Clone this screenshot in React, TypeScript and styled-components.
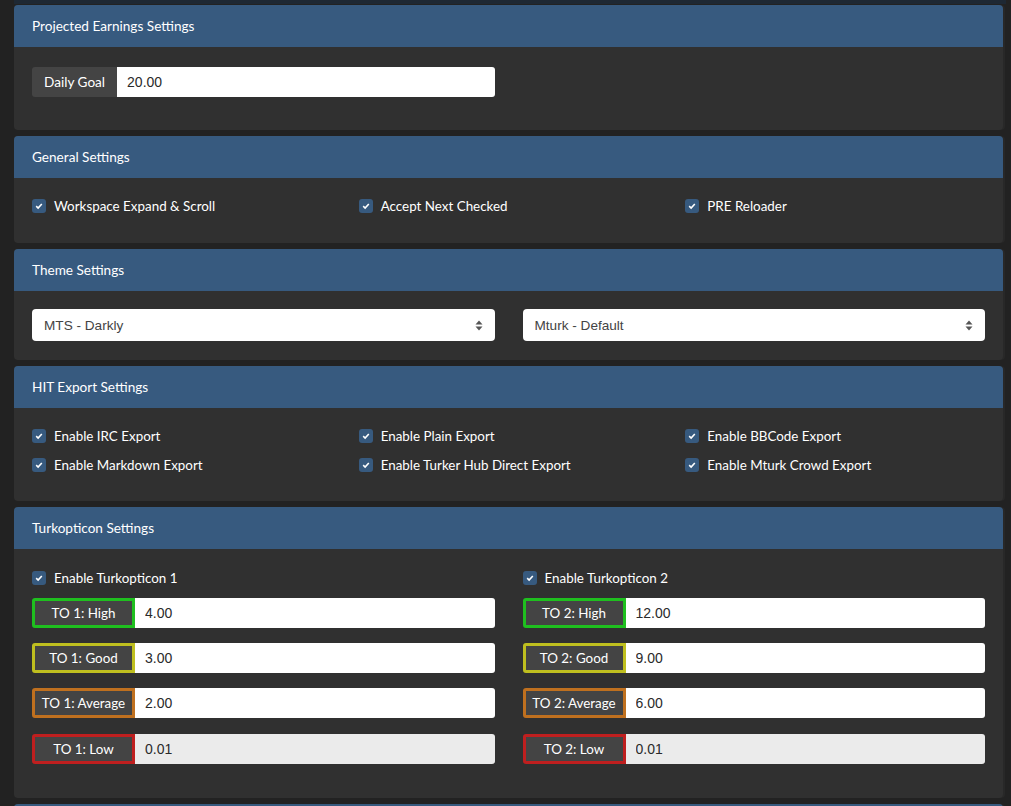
import React from "react";
import styled, { createGlobalStyle } from "styled-components";

const GlobalStyle = createGlobalStyle`
  html, body {
    margin: 0;
    padding: 0;
    background: #222;
  }
  body {
    font-family: Lato, "Noto Sans", sans-serif;
    color: #fff;
  }
  * {
    box-sizing: border-box;
  }
`;

const Page = styled.div`
  min-height: 806px;
  padding: 0 8px 0 14px;
  background: #222;
  overflow: hidden;
`;

const TopEdge = styled.div`
  height: 5px;
  margin-right: -3px;
  border-bottom: 1px solid #222;
  background: #1e2833;
`;

const Card = styled.section`
  margin-bottom: 6px;
  background: #303030;
  border-radius: 4px;
  overflow: hidden;
  box-shadow: 2px 0 0 #282828;
`;

const CardHeader = styled.header`
  height: 42px;
  padding: 0 18px;
  display: flex;
  align-items: center;
  background: #375a7f;
  font-size: 13.6px;
  color: #fff;
`;

const CardBody = styled.div<{ $pad: string }>`
  padding: ${(p) => p.$pad};
`;

const Columns = styled.div<{ $cols: number; $gap: number }>`
  display: grid;
  grid-template-columns: repeat(${(p) => p.$cols}, 1fr);
  column-gap: ${(p) => p.$gap}px;
  row-gap: 9px;
`;

const Stack = styled.div`
  display: flex;
  flex-direction: column;
`;

const CheckRow = styled.label<{ $mb?: number }>`
  display: flex;
  align-items: center;
  gap: 8px;
  height: 20px;
  margin-bottom: ${(p) => p.$mb ?? 0}px;
  font-size: 13.4px;
  color: #fff;
`;

const Box = styled.span`
  width: 14px;
  height: 14px;
  border-radius: 3px;
  background: #375a7f;
  display: flex;
  align-items: center;
  justify-content: center;
  flex-shrink: 0;
`;

const InputGroup = styled.div<{ $mb?: number }>`
  display: flex;
  height: 30px;
  margin-bottom: ${(p) => p.$mb ?? 0}px;
`;

const Addon = styled.span`
  display: flex;
  align-items: center;
  padding: 0 12px;
  background: #444;
  border-radius: 3px 0 0 3px;
  font-size: 13.6px;
  color: #fff;
  white-space: nowrap;
`;

const ToAddon = styled.span<{ $color: string }>`
  width: 103px;
  flex-shrink: 0;
  display: flex;
  align-items: center;
  justify-content: center;
  background: #444;
  border: 3px solid ${(p) => p.$color};
  border-radius: 3px 0 0 3px;
  font-size: 13.4px;
  color: #fff;
  white-space: nowrap;
`;

const TextInput = styled.input<{ $disabled?: boolean }>`
  flex: 1;
  min-width: 0;
  height: 100%;
  border: none;
  outline: none;
  border-radius: 0 3px 3px 0;
  padding: 0 10px;
  background: ${(p) => (p.$disabled ? "#ebebeb" : "#fff")};
  font-family: "Liberation Sans", Arial, sans-serif;
  font-size: 14px;
  color: #2a2a2a;
`;

const SelectBox = styled.div`
  display: flex;
  align-items: center;
  height: 32px;
  padding: 0 12px;
  background: #fff;
  border-radius: 4px;
`;

const Select = styled.select`
  flex: 1;
  appearance: none;
  border: none;
  outline: none;
  background: transparent;
  padding: 0;
  font-family: "Liberation Sans", Arial, sans-serif;
  font-size: 13.6px;
  color: #444;
`;

const Check = () => (
  <Box>
    <svg width="8" height="8" viewBox="0 0 8 8">
      <path d="M1.2 4.2 L3.1 6 L6.8 2" fill="none" stroke="#fff" strokeWidth="1.6" />
    </svg>
  </Box>
);

const Arrows = () => (
  <svg width="8" height="11" viewBox="0 0 8 11">
    <path d="M4 0.5 L7.5 4.5 H0.5 Z M4 10.5 L0.5 6.5 H7.5 Z" fill="#555" />
  </svg>
);

const Checkbox = ({ label, mb }: { label: string; mb?: number }) => (
  <CheckRow $mb={mb}>
    <Check />
    {label}
  </CheckRow>
);

const levels = [
  { name: "High", color: "#1fbf1f" },
  { name: "Good", color: "#bfbf1f" },
  { name: "Average", color: "#bf701f" },
  { name: "Low", color: "#bf1f1f" },
];

const toValues: Record<number, string[]> = {
  1: ["4.00", "3.00", "2.00", "0.01"],
  2: ["12.00", "9.00", "6.00", "0.01"],
};

const TurkopticonColumn = ({ n }: { n: number }) => (
  <Stack>
    <Checkbox label={`Enable Turkopticon ${n}`} mb={10} />
    {levels.map((lv, i) => (
      <InputGroup key={lv.name} $mb={i === 2 ? 16 : i < 3 ? 15 : 0}>
        <ToAddon $color={lv.color}>{`TO ${n}: ${lv.name}`}</ToAddon>
        <TextInput
          defaultValue={toValues[n][i]}
          $disabled={lv.name === "Low"}
          readOnly={lv.name === "Low"}
        />
      </InputGroup>
    ))}
  </Stack>
);

export default function App() {
  return (
    <>
      <GlobalStyle />
      <Page>
        <TopEdge />

        <Card>
          <CardHeader>Projected Earnings Settings</CardHeader>
          <CardBody $pad="20px 18px 33px">
            <Columns $cols={2} $gap={28}>
              <InputGroup>
                <Addon>Daily Goal</Addon>
                <TextInput defaultValue="20.00" />
              </InputGroup>
            </Columns>
          </CardBody>
        </Card>

        <Card>
          <CardHeader>General Settings</CardHeader>
          <CardBody $pad="18px 18px 27px">
            <Columns $cols={3} $gap={27}>
              <Checkbox label="Workspace Expand & Scroll" />
              <Checkbox label="Accept Next Checked" />
              <Checkbox label="PRE Reloader" />
            </Columns>
          </CardBody>
        </Card>

        <Card>
          <CardHeader>Theme Settings</CardHeader>
          <CardBody $pad="18px 18px 19px">
            <Columns $cols={2} $gap={28}>
              <SelectBox>
                <Select defaultValue="darkly">
                  <option value="darkly">MTS - Darkly</option>
                </Select>
                <Arrows />
              </SelectBox>
              <SelectBox>
                <Select defaultValue="default">
                  <option value="default">Mturk - Default</option>
                </Select>
                <Arrows />
              </SelectBox>
            </Columns>
          </CardBody>
        </Card>

        <Card>
          <CardHeader>HIT Export Settings</CardHeader>
          <CardBody $pad="18px 18px 26px">
            <Columns $cols={3} $gap={27}>
              <Checkbox label="Enable IRC Export" />
              <Checkbox label="Enable Plain Export" />
              <Checkbox label="Enable BBCode Export" />
              <Checkbox label="Enable Markdown Export" />
              <Checkbox label="Enable Turker Hub Direct Export" />
              <Checkbox label="Enable Mturk Crowd Export" />
            </Columns>
          </CardBody>
        </Card>

        <Card>
          <CardHeader>Turkopticon Settings</CardHeader>
          <CardBody $pad="19px 18px 34px">
            <Columns $cols={2} $gap={28}>
              <TurkopticonColumn n={1} />
              <TurkopticonColumn n={2} />
            </Columns>
          </CardBody>
        </Card>

        <Card>
          <CardHeader />
        </Card>
      </Page>
    </>
  );
}
